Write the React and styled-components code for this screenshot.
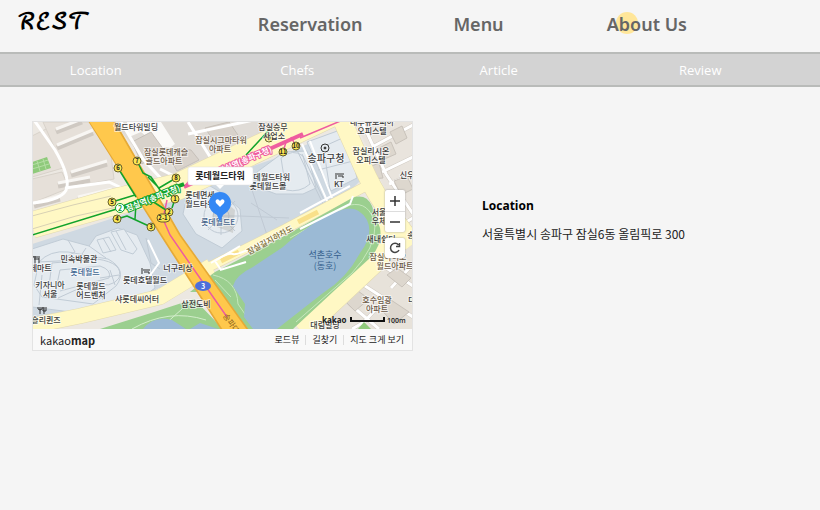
import React from 'react';
import styled, { createGlobalStyle } from 'styled-components';

const GlobalStyle = createGlobalStyle`
  * { box-sizing: border-box; }
  body {
    margin: 0;
    background: #f5f5f5;
    color: #222;
    font-family: 'Noto Sans', 'Noto Sans CJK KR', sans-serif;
  }
`;

const Header = styled.header`
  display: grid;
  grid-template-columns: 226px 1fr 89px;
  height: 52px;
`;

const Logo = styled.a`
  padding: 5px 0 0 17px;
  color: #000;
  font-family: 'DejaVu Math TeX Gyre', 'DejaVu Serif', serif;
  font-size: 22px;
  font-weight: 700;
  line-height: 36px;
  text-decoration: none;
`;

const MainNav = styled.nav`
  display: grid;
  grid-template-columns: repeat(3, 1fr);
  align-items: center;
  justify-items: center;
  padding-bottom: 4px;
`;

const MainLink = styled.a`
  position: relative;
  color: #666;
  font-family: 'Noto Sans', sans-serif;
  font-size: 18px;
  font-weight: 600;
  line-height: 24px;
  text-decoration: none;
`;

const Dot = styled.span`
  position: absolute;
  z-index: -1;
  top: 0;
  left: 9px;
  width: 22px;
  height: 22px;
  border-radius: 50%;
  background: #ffe699;
`;

const SubNav = styled.nav`
  display: grid;
  grid-template-columns: repeat(4, 1fr);
  align-items: center;
  height: 35px;
  padding-right: 14px;
  border: solid #b9bbb9;
  border-width: 2px 0;
  background: #d3d3d3;
`;

const SubLink = styled.a`
  padding-right: 10px;
  color: #fff;
  font-family: 'Open Sans', sans-serif;
  font-size: 13px;
  line-height: 20px;
  text-align: center;
  text-decoration: none;
`;

const Main = styled.main`
  display: grid;
  grid-template-columns: minmax(0, 381fr) minmax(0, 338fr);
  gap: 69px;
  padding: 34px 0 34px 32px;
`;

const MapCard = styled.section`
  border: 1px solid #e3e3e3;
  background: #f9f9f9;
`;

const MapView = styled.div`
  position: relative;
`;

const MapDrawing = styled.svg`
  display: block;
  width: 100%;
  height: auto;
  font-family: 'Noto Sans CJK KR', sans-serif;
`;

const Controls = styled.div`
  position: absolute;
  top: 68px;
  right: 7px;
  display: grid;
  gap: 6px;
`;

const ControlGroup = styled.div`
  display: grid;
  border-radius: 2px;
  background: #fff;
  box-shadow: 0 0 2px #999;
`;

const ControlButton = styled.button`
  display: grid;
  place-items: center;
  width: 20px;
  height: ${(p) => (p.$short ? '20px' : '21px')};
  padding: 0;
  border: 0;
  background: none;
  & + & { border-top: 1px solid #ddd; }
`;

const Footer = styled.footer`
  display: flex;
  align-items: center;
  justify-content: space-between;
  height: 21px;
  padding: 0 8px 0 7px;
`;

const Brand = styled.a`
  color: #222;
  font-family: 'Noto Sans CJK KR', sans-serif;
  font-size: 11px;
  line-height: 16px;
  text-decoration: none;
`;

const MapLinks = styled.nav`
  display: flex;
`;

const MapLink = styled.a`
  color: #222;
  font-family: 'Noto Sans CJK KR', sans-serif;
  font-size: 9px;
  line-height: 10px;
  text-decoration: none;
  & + & {
    margin-left: 6px;
    padding-left: 6px;
    border-left: 1px solid #ddd;
  }
`;

const Info = styled.section`
  padding-top: 76px;
`;

const Title = styled.h2`
  margin: 0 0 10px;
  color: #000;
  font-family: 'Open Sans', sans-serif;
  font-size: 12px;
  font-weight: 700;
  line-height: 18px;
`;

const Address = styled.p`
  margin: 0;
  font-family: 'Noto Sans CJK KR', sans-serif;
  font-size: 12px;
  line-height: 18px;
`;

const labels = [
  ['월드타워빌딩', 136, 130], ['잠실롯데캐슬', 166, 155, '#6b5a48'], ['골드아파트', 164, 164, '#6b5a48'],
  ['잠실시그마타워', 221, 143, '#6b5a48'], ['아파트', 220, 152, '#6b5a48'],
  ['잠실승무', 273, 130], ['사업소', 274, 139],
  ['대우유로피아', 372, 125], ['오피스텔', 372, 134], ['잠실리시온', 371, 154], ['오피스텔', 371, 163],
  ['KT', 339, 187], ['신우', 407, 178],
  ['롯데월드타워', 268, 180], ['롯데월드몰', 268, 189],
  ['롯데면세', 200, 198], ['월드타워', 200, 207], ['롯데월드E', 218, 225, '#46658c'],
  ['민속박물관', 79, 262], ['롯데월드', 85, 275, '#3f6693'], ['롯데마트', 37, 271],
  ['키자니아', 50, 288], ['서울', 50, 297], ['롯데월드', 91, 289], ['어드벤처', 91, 298],
  ['롯데호텔월드', 145, 283], ['샤롯데씨어터', 137, 302], ['슬리퀸즈', 46, 323],
  ['너구리상', 178, 271], ['삼전도비', 196, 307],
  ['서울', 379, 215], ['우체', 379, 224], ['새내쉼터', 381, 242], ['송', 411, 238],
  ['잠실아이오', 388, 260, '#6b5a48'], ['월드아파트', 395, 269, '#6b5a48'],
  ['호수임광', 377, 303, '#6b5a48'], ['아파트', 377, 312, '#6b5a48'], ['대', 412, 303], ['대림빌딩', 325, 328],
];

const exits = [
  ['6', 118, 168], ['7', 137, 161], ['5', 112, 202], ['4', 117, 219], ['3', 151, 227],
  ['8', 176, 178], ['1', 175, 199], ['2', 169, 212], ['9', 269, 138], ['11', 283, 152], ['10', 296, 146],
];

function Label({ x, y, size = 8, color = '#3c3c3c', weight = 500, children }) {
  return (
    <text x={x} y={y} fontSize={size} fill={color} fontWeight={weight} textAnchor="middle"
      stroke="#fff" strokeOpacity="0.6" strokeWidth="2" strokeLinejoin="round" paintOrder="stroke">
      {children}
    </text>
  );
}

function Terrain() {
  return (
    <g>
      <path fill="#ece8e2" d="M32 122h381v207H32z" />
      {/* blocks north-west */}
      <g stroke="#d8d2ca" strokeWidth="1">
        <path fill="#e6e0d9" d="M32 136 50 127 69 156 63 168 32 177Z" />
        <path fill="#e6e0d9" d="M32 179 62 172 69 188 32 203Z" />
        <path fill="#e6e0d9" d="M43 122H89L111 156 114 179 72 187Z" />
      </g>
      <g fill="none" stroke="#cfc9c2" strokeWidth="5" strokeLinecap="butt">
        <path d="M57 148 93 133M71 175 107 164M58 186 90 180M78 200 112 192M34 206 60 199M56 132 82 122" />
      </g>
      <g fill="none" stroke="#f8f6f3" strokeWidth="3">
        <path d="M57 145 93 130M71 172 107 161M58 183 90 177M78 197 112 189M34 203 60 196M56 129 82 119" />
      </g>
      <path fill="none" stroke="#fff" strokeWidth="3" d="M34 120 55 150Q69 174 67 187T32 203M65 188 109 182 130 192" />
      <path fill="#8fca7b" d="M32 162 47 157 51 168 32 174Z" />
      <path fill="none" stroke="#b5deA4" d="M32 165 48 160M32 169 49 164M37 161 40 171M43 159 46 169" />

      {/* blocks north-centre */}
      <path fill="#e0dcd7" d="M113 122H290L278 128 180 181 168 188Z" />
      <path fill="#fbfaf8" d="M127 122h34l14 22-10 8-24-20-12 5Z" />
      <path fill="#d8d2cb" stroke="#c6c0b9" d="M132 142 151 132 164 150 142 164ZM164 148 191 150 199 160 177 171ZM205 128 229 122 240 138 218 147Z" />
      <path fill="none" stroke="#fff" strokeWidth="3" d="M120 120 143 159 166 184M188 122 214 163M188 134 268 117M160 169 182 180" />

      {/* district of towers and city hall */}
      <path fill="#cfd9e2" d="M32 244 120 216 178 197 216 179 279 157 339 130 349 136 363 178 350 191 280 230 191 281 162 294 70 325 32 319Z" />
      <g fill="#e5ebf0" stroke="#c1ccd6">
        <path d="M32 249 63 239 89 246 96 236 118 228 137 235 150 263 155 288 130 307 94 315 32 307Z" />
        <path d="M188 191 205 183 222 193 240 209 242 231 222 248 196 234 183 214Z" />
        <path d="M257 172 284 152 307 151 316 188 303 194 276 194 260 188Z" />
        <path d="M307 142 340 130 349 145 357 178 331 191 319 169Z" />
        <path d="M281 158Q293 148 303 156L310 184Q300 193 286 190Z" />
        <path d="M111 232 124 229 137 249 133 254 121 250ZM97 240 109 237 116 250 103 253Z" />
        <path d="M34 285 39 262Q50 250 68 252L108 259Q128 270 116 286L93 304 42 297Z" />
      </g>
      <g fill="none" stroke="#c0cad4">
        <path d="M49 286 52 263 97 259Q124 263 119 278 112 289 91 283L58 298M57 284 60 270 100 266Q112 270 109 278L60 291M38 262 78 260 86 248M80 299 97 286 103 300M42 275 39 305M68 240 75 252 61 260M89 246 106 258M146 238 151 263 160 269M116 231 126 250M103 238 111 252" />
        <circle cx="221" cy="216" r="17" /><circle cx="221" cy="216" r="8" />
        <path d="M221 216 235 201M221 216 240 216M221 216 235 231M221 216 221 235M221 216 208 230M100 278 119 275M110 270 115 285" />
        <path d="M302 154 324 200M293 142 324 206M327 145 347 136M318 170 357 160M330 190 325 158M251 187 267 235M240 216 289 218M251 203 277 220" />
      </g>
      <path fill="none" stroke="#fff" strokeWidth="2" d="M302 144 328 203M310 141 332 198M148 240 159 263 146 281M135 302 160 289" />
      <path fill="#a8a79f" opacity=".35" d="m215 194 20 16-2 23-21-8z" />

      {/* blocks east */}
      <path fill="#e9e4dd" d="M355 122H413V224L386 193 372 158Z" />
      <path fill="#e7e2da" d="M384 256 413 242V329H303Z" />
      <g fill="none" stroke="#cfc9c1" strokeWidth="4">
        <path d="M363 124 386 174 413 214M374 146 413 125M382 172 413 157M389 184 413 174M395 229 413 218" />
        <path d="M362 284 413 317M382 265 413 286M345 300 379 329M386 298 364 322 352 329M391 288 413 264M323 319 345 300" />
      </g>
      <g fill="none" stroke="#fff" strokeWidth="3">
        <path d="M363 124 386 174 413 214M374 146 413 125M382 172 413 157M389 184 413 174M395 229 413 218" />
        <path d="M362 284 413 317M382 265 413 286M345 300 379 329M386 298 364 322 352 329M391 288 413 264M323 319 345 300" />
      </g>
      <g fill="#ddd7ce" stroke="#c9c3bb">
        <path d="M377 149 391 142 396 154 382 160ZM390 132 402 126 407 138 396 144ZM394 181 407 176 413 189 401 195ZM387 275 397 268 411 278 402 287ZM345 301 358 291 369 299 355 311ZM379 307 391 300 409 312 394 324ZM367 168 379 163 383 178 372 179Z" />
      </g>
      <path fill="#8fca7b" d="M358 329 364 322 371 329Z" />

      {/* wide streets */}
      <g fill="none" stroke="#e2d9b0" strokeLinejoin="round">
        <path strokeWidth="27" d="M32 225 110 203 177 187 276 140 335 112" />
        <path strokeWidth="16" d="M30 326 80 316 160 297 211 266" />
        <path strokeWidth="10" d="M207 268 285 229 370 184" />
        <path strokeWidth="19" d="M342 120Q352 142 362 165T383 204L413 244M384 208Q394 240 379 260L302 332" />
      </g>
      <g fill="none" stroke="#fff8c4" strokeLinejoin="round">
        <path strokeWidth="26" d="M32 225 110 203 177 187 276 140 335 112" />
        <path strokeWidth="15" d="M30 326 80 316 160 297 211 266" />
        <path strokeWidth="9" d="M207 268 285 229 370 184" />
        <path strokeWidth="18" d="M342 120Q352 142 362 165T383 204L413 244M384 208Q394 240 379 260L302 332" />
      </g>
      <path fill="none" stroke="#d8d1b4" d="M32 216 73 205 111 196M32 229 76 216 122 206M188 183 214 173 285 142" />
      <path fill="none" stroke="#f9e08a" strokeWidth="5" d="M221 261 239 252M298 222 318 212" />

      {/* park and lake */}
      <path fill="#9bcf8f" d="M190 292 215 272 288 234 352 198Q366 193 372 206L380 228Q383 244 370 258L335 290 293 329H246L229 303 199 292Z" />
      <path fill="none" stroke="#c6e7bd" strokeWidth="1" d="M213 275Q237 280 238 304L249 320M215 280 231 297M290 238 350 205Q370 201 375 225 376 247 352 273L296 322" />
      <path fill="#9bbad5" d="M233 286Q236 275 253 267L283 247Q294 237 303 231L325 215 345 209Q359 206 367 220 374 235 360 253 347 278 323 293L277 329H253L244 317 245 304Z" />
      <path fill="#9bcf8f" d="M100 329 151 313 194 299 223 329Z" />
      <path fill="none" stroke="#d3edcb" strokeWidth="1" d="M132 329Q169 308 206 320M163 326 182 309" />
      <path fill="#9bbad5" d="M143 329Q154 315 172 320L186 329ZM190 329 200 323 218 329Z" />
      <path fill="none" stroke="#fff" strokeWidth="2" d="M211 263Q228 252 233 254T269 239M220 270 246 262M300 229 328 215 350 204 353 196M300 213 350 186M221 270 215 261 240 246" />

      {/* main avenue */}
      <path fill="#e6aa37" d="M88 121H115L181 235 249 330H221L160 235Z" />
      <path fill="#ffc84c" d="M89 121H113L179 235 247 330H223L162 235Z" />
    </g>
  );
}

function Transit() {
  return (
    <g>
      <path fill="none" stroke="#ee5ba0" strokeWidth="1.5" d="M167 200 163 219 170 235 227 317M184 187 190 180M300 138 350 117" />
      <path fill="none" stroke="#ef5d9f" strokeWidth="4" d="M184 187 303 134" />
      <path fill="none" stroke="#ee5ba0" strokeWidth="1.5" d="m283 152 3-10M296 146l-5-9" />
      <g fill="none" stroke="#12a32b" strokeWidth="1.5" strokeLinejoin="round">
        <path d="M32 235 120 208 184 185M118 168 136 197M137 161 143 173 151 177 162 193M112 202 135 195M117 219 127 216 151 227M136 204 135 219M176 178 159 188 148 177M175 199 168 193M169 212 152 201M175 199 172 208M246 155 270 129" />
      </g>
      <path stroke="#12a32b" strokeWidth="4" d="M123 207 184 184" />
      <g transform="rotate(-22 153 198)">
        <text x="153" y="201" textAnchor="middle" fontSize="8" fontWeight="700" fill="#fff" stroke="#12a32b" strokeWidth="2" paintOrder="stroke">잠실역(송파구청)</text>
      </g>
      <g transform="rotate(-23 245 160)">
        <text x="245" y="163" textAnchor="middle" fontSize="8" fontWeight="700" fill="#fff" stroke="#ef5d9f" strokeWidth="2" paintOrder="stroke">잠실역(송파구청)</text>
      </g>
      <circle cx="120" cy="208" r="4.5" fill="#fff" stroke="#12a32b" />
      <text x="120" y="211" textAnchor="middle" fontSize="7" fontWeight="700" fill="#12a32b">2</text>
      {exits.map(([n, x, y]) => (
        <g key={n}>
          <circle cx={x} cy={y} r="4" fill="#fae652" stroke="#66602d" />
          <text x={x} y={y + 2} textAnchor="middle" fontSize="6" fontWeight="700" fill="#222">{n}</text>
        </g>
      ))}
      <rect x="157" y="214" width="13" height="8" rx="4" fill="#fae652" stroke="#66602d" />
      <text x="163" y="220" textAnchor="middle" fontSize="6" fontWeight="700" fill="#222">2-1</text>
      <ellipse cx="203" cy="286" rx="8" ry="5" fill="#4d6edb" />
      <text x="203" y="289" textAnchor="middle" fontSize="7" fontWeight="700" fill="#fff">3</text>
      <g transform="rotate(-29 270 240)"><Label x="270" y="243" color="#7b6c36">잠실길지하차도</Label></g>
      <g transform="rotate(54 229 320)"><text x="222" y="323" fontSize="8" fill="#86601c">송파대로</text></g>
    </g>
  );
}

function MapIcons() {
  return (
    <g>
      <g fill="none" stroke="#333">
        <circle cx="325" cy="148" r="4" /><circle cx="325" cy="148" r="1" fill="#333" />
        <path strokeWidth="1" d="M336 173v6M337 174h7M338 176h5M343 176v2M142 268v6M143 270h7M144 272h5M149 272v2" />
        <path d="M33 256v1h7M34 259h5M35 256v8M39 258v5M40 307v7M44 307v7M38 307v2q2 2 4 0v-2M43 307v4h3v-4" />
      </g>
      {labels.map(([t, x, y, c], i) => <Label key={i} x={x} y={y} color={c}>{t}</Label>)}
      <Label x={326} y={162} size={10}>송파구청</Label>
      <g fontSize="9" fill="#355f8d" textAnchor="middle">
        <text x="325" y="258">석촌호수</text>
        <text x="325" y="269">(동호)</text>
      </g>
    </g>
  );
}

function Marker() {
  return (
    <g>
      <rect x="188" y="167" width="65" height="18" rx="2" fill="#fff" stroke="#ddd" strokeWidth=".5" />
      <path fill="#fff" d="m216 185 4 4 4-4z" />
      <text x="220" y="179" textAnchor="middle" fontSize="9" fontWeight="700" fill="#222">롯데월드타워</text>
      <path fill="#3388f5" d="M220 222 217 215C211 212 209 208 209 203A11 11 0 0 1 231 203C231 208 228 212 223 215Z" />
      <path fill="#fff" d="M220 207 216 203Q215 201 216 200 218 198 220 201 222 198 224 200 225 201 224 203Z" />
    </g>
  );
}

function ScaleBar() {
  return (
    <g>
      <text x="322" y="323" fontSize="8" fontWeight="700" fill="#222" fontFamily="Open Sans">kakao</text>
      <path d="M351 317v4h33v-4" fill="none" stroke="#111" strokeWidth="2" />
      <text x="387" y="323" fontSize="7" fontWeight="600" fill="#222" fontFamily="Open Sans">100m</text>
    </g>
  );
}

function LocationMap() {
  return (
    <MapCard aria-label="지도">
      <MapView>
        <MapDrawing viewBox="33 122 379 207" role="img" aria-label="롯데월드타워">
          <Terrain />
          <Transit />
          <MapIcons />
          <ScaleBar />
          <Marker />
        </MapDrawing>
        <Controls>
          <ControlGroup>
            <ControlButton aria-label="확대">
              <svg width="12" height="12" fill="none" stroke="#333" strokeWidth="1.5"><path d="M6 1v10M1 6h10" /></svg>
            </ControlButton>
            <ControlButton aria-label="축소">
              <svg width="12" height="12" fill="none" stroke="#333" strokeWidth="1.5"><path d="M1 6h10" /></svg>
            </ControlButton>
          </ControlGroup>
          <ControlGroup>
            <ControlButton $short aria-label="새로고침">
              <svg width="12" height="12" fill="none" stroke="#444" strokeWidth="1.5"><path d="M10 8A4.5 4.5 0 1 1 9.5 3M10.500 1v3.500H7" /></svg>
            </ControlButton>
          </ControlGroup>
        </Controls>
      </MapView>
      <Footer>
        <Brand href="#map">kakao<b>map</b></Brand>
        <MapLinks>
          <MapLink href="#roadview">로드뷰</MapLink>
          <MapLink href="#route">길찾기</MapLink>
          <MapLink href="#large">지도 크게 보기</MapLink>
        </MapLinks>
      </Footer>
    </MapCard>
  );
}

export default function App() {
  return (
    <>
      <GlobalStyle />
      <Header>
        <Logo href="#home">ℛℰ𝒮𝒯</Logo>
        <MainNav>
          <MainLink href="#reservation">Reservation</MainLink>
          <MainLink href="#menu">Menu</MainLink>
          <MainLink href="#about"><Dot />About Us</MainLink>
        </MainNav>
      </Header>
      <SubNav>
        <SubLink href="#location">Location</SubLink>
        <SubLink href="#chefs">Chefs</SubLink>
        <SubLink href="#article">Article</SubLink>
        <SubLink href="#review">Review</SubLink>
      </SubNav>
      <Main>
        <LocationMap />
        <Info>
          <Title>Location</Title>
          <Address>서울특별시 송파구 잠실6동 올림픽로 300</Address>
        </Info>
      </Main>
    </>
  );
}
